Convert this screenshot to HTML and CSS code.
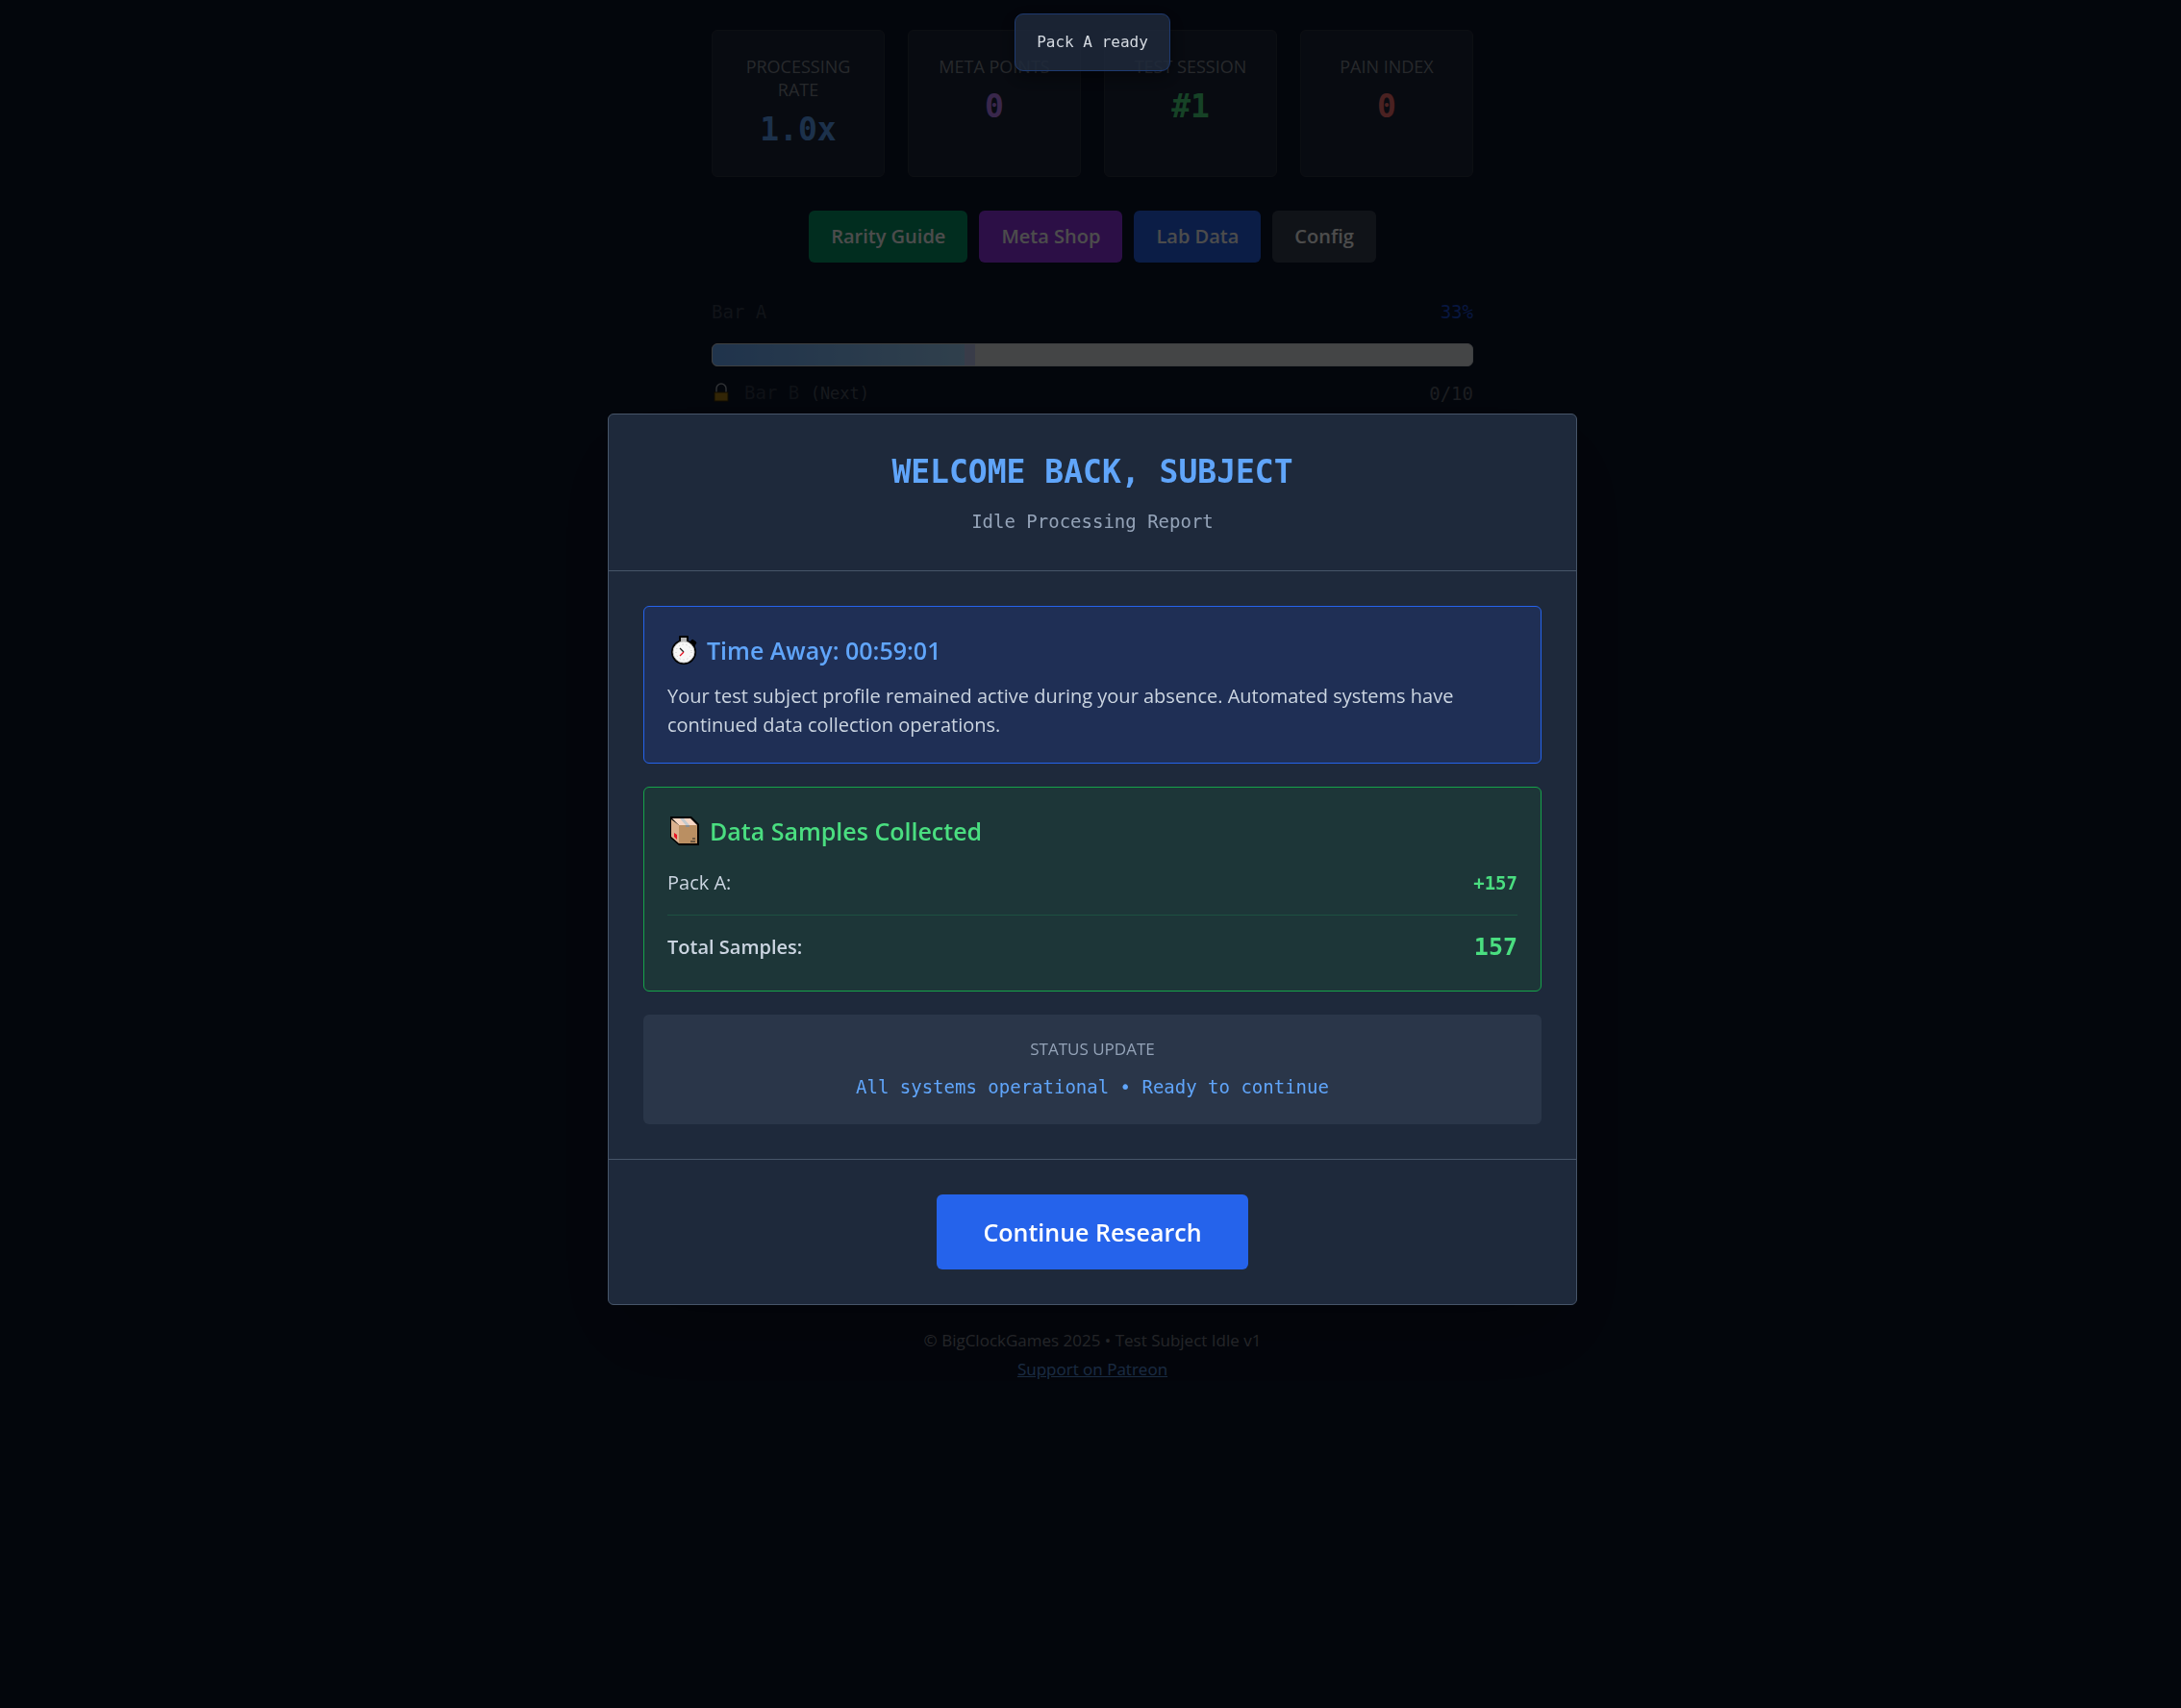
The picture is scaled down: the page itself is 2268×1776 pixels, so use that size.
FILE: index.html
```html
<!DOCTYPE html>
<html lang="en">
<head>
    <meta charset="UTF-8">
    <meta name="viewport" content="width=device-width, initial-scale=1.0">
    <title>Test Subject Idle</title>
    <link rel="stylesheet" href="styles.css">
</head>
<body>
    <main class="page">
        <!-- Stat cards -->
        <div class="stats">
            <div class="stat-card">
                <div class="stat-label">PROCESSING RATE</div>
                <div class="stat-value blue">1.0x</div>
            </div>
            <div class="stat-card">
                <div class="stat-label">META POINTS</div>
                <div class="stat-value purple">0</div>
            </div>
            <div class="stat-card">
                <div class="stat-label">TEST SESSION</div>
                <div class="stat-value green">#1</div>
            </div>
            <div class="stat-card">
                <div class="stat-label">PAIN INDEX</div>
                <div class="stat-value red">0</div>
            </div>
        </div>

        <!-- Menu buttons -->
        <div class="menu">
            <button type="button" class="btn-green">Rarity Guide</button>
            <button type="button" class="btn-purple">Meta Shop</button>
            <button type="button" class="btn-blue">Lab Data</button>
            <button type="button" class="btn-gray">Config</button>
        </div>

        <!-- Progress bars -->
        <div class="bars">
            <div class="bar-row">
                <span>Bar A</span>
                <span class="bar-percent">33%</span>
            </div>
            <div class="bar-track">
                <div class="bar-fill" style="width: 34.5%;"></div>
            </div>
            <div class="bar-row locked">
                <span class="bar-name">
                    <svg class="lock" viewBox="0 0 20 22" aria-hidden="true">
                        <path d="M5 10V6a5 5 0 0 1 10 0v4" fill="none" stroke="#9ca3af" stroke-width="1.5"/>
                        <rect x="3" y="10" width="14" height="9" fill="#a87c14" stroke="#3d2c04"/>
                    </svg>
                    <span>Bar B <span class="bar-next">(Next)</span></span>
                </span>
                <span class="bar-count">0/10</span>
            </div>
        </div>
    </main>

    <footer class="footer">
        <p>© BigClockGames 2025 • Test Subject Idle v1</p>
        <a href="#">Support on Patreon</a>
    </footer>

    <!-- Welcome back modal -->
    <div class="overlay">
        <div class="modal" role="dialog" aria-labelledby="modalTitle">
            <div class="modal-header">
                <h2 id="modalTitle">WELCOME BACK, SUBJECT</h2>
                <p>Idle Processing Report</p>
            </div>
            <div class="modal-body">
                <div class="box time-box">
                    <h3>
                        <svg class="icon-watch" viewBox="0 0 30 32" aria-hidden="true">
                            <rect x="9" y="1" width="10" height="7" rx="1" fill="#000"/>
                            <path d="M20 8l3-3 4 3-2 4z" fill="#000" stroke="#000"/>
                            <circle cx="14" cy="18" r="13" fill="#000"/>
                            <rect x="11" y="3" width="6" height="4" fill="#b5b5b5"/>
                            <circle cx="14" cy="18" r="11" fill="#f7f7f7" stroke="#c9c9c9"/>
                            <circle cx="14" cy="18" r="8" fill="none" stroke="#c4c4c4" stroke-dasharray="1 3"/>
                            <path d="M10 14l4 4" stroke="#222" stroke-width="1.2"/>
                            <path d="M14 18l-4 4" stroke="#e81224" stroke-width="1.2"/>
                        </svg>
                        Time Away: 00:59:01
                    </h3>
                    <p>Your test subject profile remained active during your absence. Automated systems have continued data collection operations.</p>
                </div>
                <div class="box sample-box">
                    <h3>
                        <svg class="icon-box" viewBox="0 0 34 32" aria-hidden="true">
                            <path d="M3 1h22l8 8v22H12l-9-8z" fill="#000"/>
                            <path d="M5 3h19l7 7H12z" fill="#f7d7c4"/>
                            <path d="M4 4l8 6v19l-8-7z" fill="#dbb08e"/>
                            <path d="M12 10h19v19H12z" fill="#ba8f62"/>
                            <path d="M13 3h4l6 7v2h-4v-2z" fill="#c3c9cd"/>
                            <path d="M19 10h4v2h-4z" fill="#8d8f90"/>
                            <path d="M7 18l3 2v5l-3-3z" fill="#e81224"/>
                            <path d="M26 24h3M24 27h5" stroke="#222" stroke-width="1"/>
                        </svg>
                        Data Samples Collected
                    </h3>
                    <div class="sample-row">
                        <span>Pack A:</span>
                        <span class="sample-count">+157</span>
                    </div>
                    <div class="sample-row total">
                        <span>Total Samples:</span>
                        <span class="sample-count">157</span>
                    </div>
                </div>
                <div class="box status-box">
                    <div class="status-label">STATUS UPDATE</div>
                    <div class="status-text">All systems operational • Ready to continue</div>
                </div>
            </div>
            <div class="modal-footer">
                <button type="button">Continue Research</button>
            </div>
        </div>
    </div>

    <div class="toast-area">
        <div class="toast" role="status">Pack A ready</div>
    </div>
</body>
</html>
```

FILE: styles.css
```css
* {
    box-sizing: border-box;
    margin: 0;
    padding: 0;
}

body {
    font-family: "Open Sans", "Noto Sans", sans-serif;
    font-size: 20px;
    line-height: 30px;
    background-color: #0c1428;
    color: #cbd5e1;
    min-height: 100vh;
    padding-left: 4px;
}

button {
    font-family: inherit;
    font-weight: 600;
    color: #fff;
    border: none;
    border-radius: 6px;
    cursor: pointer;
}

.page {
    max-width: 792px;
    margin: 0 auto;
    padding-top: 31px;
}

/* Stat cards */
.stats {
    display: grid;
    grid-template-columns: repeat(4, 1fr);
    gap: 24px;
}

.stat-card {
    background-color: #1b2539;
    border: 1px solid #2b3340;
    border-radius: 6px;
    padding: 25px 24px 24px;
    text-align: center;
}

.stat-label {
    font-size: 18px;
    line-height: 24px;
    color: #838994;
    margin-bottom: 6px;
}

.stat-value {
    font-family: "DejaVu Sans Mono", monospace;
    font-size: 33px;
    font-weight: bold;
    line-height: 48px;
}

.blue {
    color: #60a5fa;
}

.purple {
    color: #c084fc;
}

.green {
    color: #4ade80;
}

.red {
    color: #f87171;
}

/* Menu buttons */
.menu {
    display: flex;
    justify-content: center;
    gap: 12px;
    margin-top: 35px;
}

.menu button {
    font-size: 20px;
    line-height: 30px;
    padding: 12px 23px;
}

.menu .btn-green {
    background-color: #059669;
}

.menu .btn-purple {
    background-color: #9333ea;
}

.menu .btn-blue {
    background-color: #2563eb;
}

.menu .btn-gray {
    background-color: #374151;
}

/* Progress bars */
.bars {
    margin-top: 36px;
    font-family: "DejaVu Sans Mono", monospace;
    font-size: 19px;
}

.bar-row {
    display: flex;
    justify-content: space-between;
    align-items: center;
    color: #374151;
}

.bar-percent {
    color: #1d4ed8;
}

.bar-track {
    height: 24px;
    margin: 18px 0 12px;
    background-color: #e5e7eb;
    border: 1px solid #d1d5db;
    border-radius: 6px;
    overflow: hidden;
}

.bar-fill {
    height: 100%;
    background: linear-gradient(90deg, #6badff, #a0d5fd 96%, #c0c8f5 96%);
}

.locked {
    color: #303a4a;
}

.bar-name {
    display: flex;
    align-items: center;
    gap: 14px;
}

.lock {
    width: 20px;
    height: 22px;
}

.bar-next {
    font-size: 17px;
    color: #4b5563;
}

.bar-count {
    color: #5d636e;
}

.footer {
    margin-top: 955px;
    text-align: center;
    font-size: 17px;
    color: #838994;
}

.footer a {
    color: #5a94e0;
}

/* Modal */
.overlay {
    position: fixed;
    inset: 0;
    display: flex;
    align-items: center;
    justify-content: center;
    padding: 10px 0 0 4px;
    background-color: rgba(0, 0, 0, 0.7);
}

.modal {
    width: 100%;
    max-width: 1008px;
    background-color: #1e293b;
    border: 1px solid #475569;
    border-radius: 6px;
    box-shadow: 0 36px 72px -18px rgba(0, 0, 0, 0.3);
}

.modal-header {
    padding: 36px;
    text-align: center;
    border-bottom: 1px solid #475569;
}

.modal-header h2 {
    font-family: "DejaVu Sans Mono", monospace;
    font-size: 33px;
    line-height: 48px;
    color: #60a5fa;
    margin-bottom: 12px;
}

.modal-header p {
    font-family: "DejaVu Sans Mono", monospace;
    font-size: 19px;
    color: #94a3b8;
}

.modal-body {
    display: flex;
    flex-direction: column;
    gap: 24px;
    padding: 36px;
}

.box {
    padding: 24px;
    border-radius: 6px;
}

.box h3 {
    display: flex;
    align-items: center;
    gap: 10px;
    font-size: 25px;
    font-weight: 600;
    line-height: 42px;
}

.icon-watch {
    width: 30px;
    height: 32px;
    margin-left: 3px;
    margin-right: -2px;
}

.icon-box {
    width: 34px;
    height: 32px;
}

.time-box {
    background-color: #1f2f55;
    border: 1px solid #2563eb;
}

.time-box h3 {
    color: #60a5fa;
    margin-bottom: 12px;
}

.sample-box {
    background-color: #1d3638;
    border: 1px solid #16a34a;
}

.sample-box h3 {
    color: #4ade80;
    margin-bottom: 18px;
}

.sample-row {
    display: flex;
    justify-content: space-between;
    align-items: center;
}

.sample-count {
    font-family: "DejaVu Sans Mono", monospace;
    font-size: 19px;
    font-weight: bold;
    color: #4ade80;
}

.total {
    margin-top: 18px;
    padding-top: 12px;
    border-top: 1px solid #1d5141;
    font-weight: 600;
    line-height: 42px;
}

.total .sample-count {
    font-size: 25px;
}

.status-box {
    background-color: #2a3649;
    text-align: center;
}

.status-label {
    font-size: 17px;
    line-height: 24px;
    color: #94a3b8;
    margin-bottom: 12px;
}

.status-text {
    font-family: "DejaVu Sans Mono", monospace;
    font-size: 19px;
    color: #60a5fa;
}

.modal-footer {
    padding: 36px;
    text-align: center;
    border-top: 1px solid #475569;
}

.modal-footer button {
    display: inline-block;
    vertical-align: top;
    background-color: #2563eb;
    font-size: 25px;
    line-height: 42px;
    padding: 18px 48px;
}

/* Toast */
.toast-area {
    position: fixed;
    top: 14px;
    left: 0;
    right: 0;
    display: flex;
    justify-content: center;
    padding-left: 4px;
}

.toast {
    padding: 14px 22px;
    font-family: "DejaVu Sans Mono", monospace;
    font-size: 16px;
    color: #d5dae1;
    background-color: rgba(30, 41, 59, 0.85);
    border: 1px solid #1e3a70;
    border-radius: 9px;
    box-shadow: 0 6px 18px rgba(0, 0, 0, 0.4);
}
```
